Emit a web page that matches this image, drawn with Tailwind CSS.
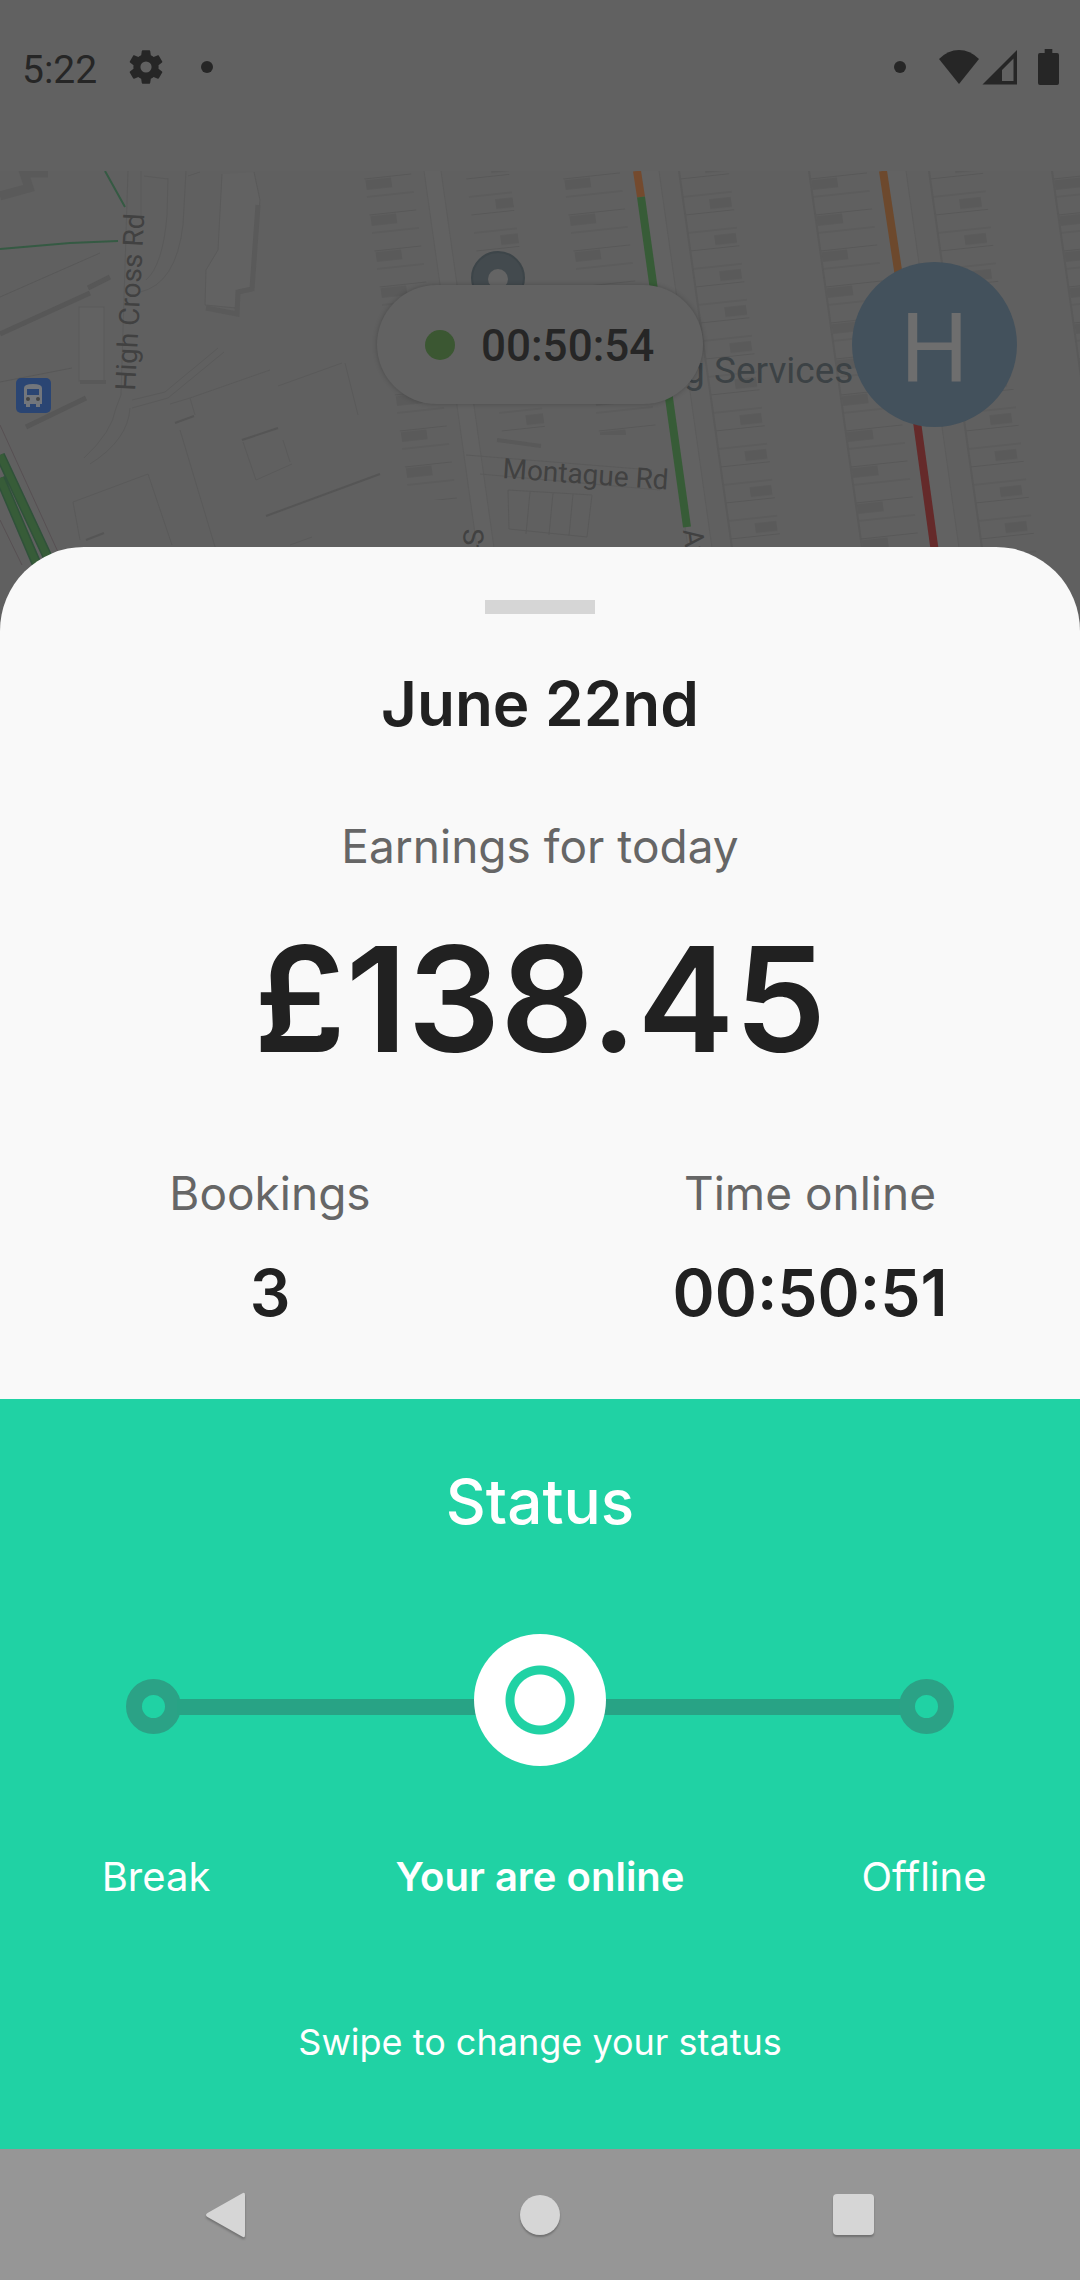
<!DOCTYPE html>
<html lang="en">
<head>
<meta charset="utf-8">
<meta name="viewport" content="width=device-width, initial-scale=1">
<title>Driver status</title>
<script src="https://cdn.jsdelivr.net/npm/@tailwindcss/browser@4"></script>
</head>
<body class="bg-[#616161] font-['Inter',sans-serif] text-[#212121]">
<div class="relative flex min-h-screen flex-col overflow-hidden">

  <!-- Dimmed street map -->
  <svg class="absolute inset-x-0 top-0 h-[640px] w-full" viewBox="0 0 1080 640" preserveAspectRatio="xMidYMin slice" fill="none" aria-hidden="true">
    <defs>
      <clipPath id="area"><rect y="171" width="1080" height="469"/></clipPath>
      <pattern id="plotsL" width="60" height="36" patternUnits="userSpaceOnUse" patternTransform="skewY(-6)">
        <path d="M0 1H60M0 19H60" stroke="#585858"/>
        <rect x="1" y="20" width="26" height="10" fill="#5a5a5a"/>
      </pattern>
      <pattern id="plotsR" width="60" height="36" patternUnits="userSpaceOnUse" patternTransform="skewY(-6)">
        <path d="M0 1H60M0 19H60" stroke="#585858"/>
        <rect x="26" y="6" width="22" height="10" fill="#5a5a5a"/>
      </pattern>
    </defs>
    <rect width="1080" height="640" fill="#616161"/>
    <g clip-path="url(#area)">
      <rect y="171" width="1080" height="469" fill="#606060"/>
      <!-- North-south streets and terraces -->
      <g transform="skewX(8)">
        <path d="M400 160h17v500h-17zM611 160h24v500h-24zM858 160h24v500h-24z" fill="#626262" stroke="#5c5c5c"/>
        <svg x="339" y="160" width="48" height="340"><rect width="48" height="340" fill="url(#plotsL)"/></svg>
        <svg x="441" y="160" width="44" height="280"><rect width="44" height="280" fill="url(#plotsR)"/></svg>
        <svg x="538" y="160" width="58" height="275"><rect width="58" height="275" fill="url(#plotsL)"/></svg>
        <svg x="655" y="160" width="50" height="400"><rect width="50" height="400" fill="url(#plotsR)"/></svg>
        <svg x="785" y="160" width="58" height="400"><rect width="58" height="400" fill="url(#plotsL)"/></svg>
        <svg x="905" y="160" width="54" height="400"><rect width="54" height="400" fill="url(#plotsR)"/></svg>
        <svg x="1028" y="160" width="50" height="240"><rect width="50" height="240" fill="url(#plotsL)"/></svg>
        <path d="M655 160V560M785 160V560M905 160V560M1028 160V400" stroke="#5a5a5a" stroke-width="2"/>
      </g>
      <!-- Cul-de-sac, access roads and large buildings -->
      <path d="M466 455 652 470M480 474 660 490" stroke="#5a5a5a"/>
      <path d="M508 490l84 5-5 42-78-8zM530 492l-4 42M553 493l-4 42M573 494l-4 42" stroke="#595959"/>
      <path d="M497 440l44 6" stroke="#595959" stroke-width="4"/>
      <path d="M128 171 121 395 116 408Q112 432 84 458M186 171 183 225Q176 284 140 292M141 171V216M168 178 167 215Q163 265 146 280M144 176 168 179M200 172 188 176" stroke="#5a5a5a"/>
      <path d="M132 400 165 392 218 348M132 408 168 398 224 352M130 408Q128 440 90 464" stroke="#5a5a5a"/>
      <path d="M222 174 218 250 206 270 205 305 236 308 238 290 252 288 260 200 254 172" fill="#626262" stroke="#5a5a5a"/>
      <path d="M206 308l31 6 1-22 14-3 6-84" stroke="#5a5a5a" stroke-width="5"/>
      <path d="M0 297 100 253M0 382 72 368" stroke="#585858"/>
      <path d="M0 334 90 293M88 288 110 277M26 427 86 398" stroke="#575757" stroke-width="5"/>
      <path d="M0 196 29 188 24 173H48" stroke="#5a5a5a" stroke-width="9"/>
      <rect x="79" y="307" width="25" height="74" fill="#626262" stroke="#5a5a5a"/>
      <path d="M80 382h26" stroke="#595959" stroke-width="4"/>
      <path d="M190 398 270 370M278 386 342 363M345 363 358 415M170 404 190 398 195 415M180 430 216 550M73 502 148 474 172 545M73 502 80 540M256 480 292 464M243 442 256 480M283 440 290 462M290 545 312 537" stroke="#5a5a5a"/>
      <path d="M175 423 194 416M242 440 278 428M266 516 380 474M86 540 104 533" stroke="#555" stroke-width="2"/>
      <path d="M0 425 58 552M0 520 22 565" stroke="#575053"/>
      <!-- Live traffic -->
      <path d="M0 455 64 592M0 478 52 600" stroke="#30523a" stroke-width="10"/>
      <path d="M0 455 64 592M0 478 52 600" stroke="#375c38" stroke-width="7"/>
      <path d="M105 171 125 207M0 249 70 243 118 241" stroke="#355a43" stroke-width="2"/>
      <path d="M637 171 641 197" stroke="#744a2e" stroke-width="8"/>
      <path d="M641 197 687 527" stroke="#375c37" stroke-width="8"/>
      <path d="M883 171 904 310" stroke="#6d492d" stroke-width="8"/>
      <path d="M914 400 936 560" stroke="#652a2a" stroke-width="8"/>
    </g>
    <!-- Place pin -->
    <circle cx="498" cy="278" r="26" fill="#434a4e" stroke="#3d4549" stroke-width="2"/>
    <circle cx="498" cy="279" r="10" fill="#646464"/>
    <!-- Bus stop -->
    <rect x="16" y="378" width="35" height="35" rx="5" fill="#2a4573"/>
    <path d="M24 388q0-4 9-4t9 4v16h-2v3h-4v-3h-6v3h-4v-3h-2z" fill="#72767c"/>
    <path d="M27 389h12v6H27z" fill="#2a4573"/>
    <circle cx="28" cy="399" r="2" fill="#444"/><circle cx="38" cy="399" r="2" fill="#444"/>
    <g class="font-['Roboto',sans-serif]" fill="#414141">
      <text x="0" y="0" font-size="28" transform="translate(135 391) rotate(-87)">High Cross Rd</text>
      <text x="0" y="0" font-size="28" transform="translate(502 478) rotate(4)">Montague Rd</text>
      <text x="0" y="0" font-size="28" transform="translate(463 529) rotate(87)">St</text>
      <text x="0" y="0" font-size="28" transform="translate(683 530) rotate(83)">Av</text>
      <text x="684" y="383" font-size="37" fill="#3c4245">g Services</text>
    </g>
  </svg>

  <!-- Status bar -->
  <header class="relative flex h-[134px] items-center justify-between pr-[21px] pl-[22px] text-[#262626]">
    <div class="flex items-center">
      <span class="w-[103px] pt-[5px] font-['Roboto',sans-serif] text-[39px] leading-[40px]">5:22</span>
      <svg class="h-[42px] w-[42px]" viewBox="0 0 24 24" fill="currentColor" role="img" aria-label="Settings"><path d="M19.14 12.94c.04-.3.06-.61.06-.94 0-.32-.02-.64-.07-.94l2.03-1.58c.18-.14.23-.41.12-.61l-1.92-3.32c-.12-.22-.37-.29-.59-.22l-2.39.96c-.5-.38-1.03-.7-1.62-.94l-.36-2.54c-.04-.24-.24-.41-.48-.41h-3.84c-.24 0-.43.17-.47.41l-.36 2.54c-.59.24-1.13.57-1.62.94l-2.39-.96c-.22-.08-.47 0-.59.22L2.740 8.870c-.12.21-.08.47.12.61l2.030 1.580c-.05.3-.09.63-.09.94s.02.64.07.94l-2.030 1.580c-.18.14-.23.41-.12.61l1.920 3.320c.12.22.37.29.59.22l2.390-.96c.5.38 1.030.7 1.620.94l.36 2.540c.05.24.24.41.48.41h3.840c.24 0 .44-.17.47-.41l.36-2.540c.59-.24 1.130-.56 1.620-.94l2.390.96c.22.08.47 0 .59-.22l1.920-3.320c.12-.22.07-.47-.12-.61l-2.010-1.580zM12 15.200A3.200 3.200 0 1 1 12 8.800a3.200 3.200 0 0 1 0 6.400z"/></svg>
      <span class="ml-[34px] size-3 rounded-full bg-current"></span>
    </div>
    <div class="flex items-center">
      <span class="mr-8 size-3 rounded-full bg-current"></span>
      <svg class="mr-[2px] h-[36px] w-[42px]" viewBox="0 0 42 36" fill="currentColor" role="img" aria-label="Wi-Fi"><path d="M21 35 1 10Q10 1 21 1T41 10z"/></svg>
      <svg class="mr-5 h-[36px] w-[36px]" viewBox="0 0 36 36" fill="currentColor" role="img" aria-label="Mobile signal"><path fill-rule="evenodd" d="M35 1v34.500H.5zM31.500 9.500 20 21V32h11.500z"/></svg>
      <svg class="h-[36px] w-[21px]" viewBox="0 0 22 36" preserveAspectRatio="none" fill="currentColor" role="img" aria-label="Battery"><path d="M7 0h8v4h5a2 2 0 0 1 2 2v28a2 2 0 0 1-2 2H2a2 2 0 0 1-2-2V6a2 2 0 0 1 2-2h5z"/></svg>
    </div>
  </header>

  <!-- Online timer and account -->
  <div class="relative grid grid-cols-[1fr_auto_1fr] items-center pt-32 pb-[120px] font-['Roboto',sans-serif]">
    <div class="col-start-2 flex h-[119px] w-[326px] items-center rounded-full bg-[#626262] pl-12 shadow-[0_0_5px_rgba(0,0,0,0.22)]">
      <span class="size-[30px] rounded-full bg-[#3b5732]"></span>
      <span class="ml-[26px] pt-[2px] text-[44px] leading-[52px] font-medium text-[#262626]">00:50:54</span>
    </div>
    <button type="button" aria-label="Account" class="mr-[63px] flex size-[165px] items-center justify-center justify-self-end rounded-full bg-[#43515c] pt-[8px] text-[96px] leading-none text-[#6e6e6e]">H</button>
  </div>

  <!-- Earnings sheet -->
  <main class="relative flex flex-col rounded-t-[84px] bg-[#f9f9f9] text-center">
    <div class="mx-auto mt-[53px] h-[14px] w-[110px] bg-[#d6d6d6]"></div>
    <h1 class="mt-[50px] text-[62px] leading-[80px] font-semibold">June 22nd</h1>
    <p class="mt-[72px] text-[46px] leading-[60px] text-[#666]">Earnings for today</p>
    <p class="mt-[43px] text-[146px] leading-[160px] font-semibold">£138.45</p>
    <dl class="mt-[84px] grid grid-cols-2 pb-[66px]">
      <div>
        <dt class="text-[46px] leading-[60px] text-[#666]">Bookings</dt>
        <dd class="mt-[30px] text-[64px] leading-[80px] font-semibold">3</dd>
      </div>
      <div>
        <dt class="text-[46px] leading-[60px] text-[#666]">Time online</dt>
        <dd class="mt-[30px] text-[64px] leading-[80px] font-semibold">00:50:51</dd>
      </div>
    </dl>
  </main>

  <!-- Status slider -->
  <section class="relative flex-1 bg-[#20d2a4] pt-[63px] pb-[77px] text-center text-white">
    <h2 class="text-[62px] leading-[80px] font-medium"><label for="status">Status</label></h2>
    <div class="relative mt-[92px]">
      <div class="absolute inset-x-[126px] top-[45px] flex items-center">
        <span class="size-[55px] rounded-full border-[16px] border-[#2ba286]"></span>
        <span class="-mx-1 h-4 flex-1 bg-[#28a385]"></span>
        <span class="size-[55px] rounded-full border-[16px] border-[#2ba286]"></span>
      </div>
      <div class="relative px-[87px]">
        <input id="status" type="range" min="0" max="2" step="1" value="1" class="block h-[132px] w-full appearance-none bg-transparent [&::-webkit-slider-thumb]:size-[132px] [&::-webkit-slider-thumb]:appearance-none [&::-webkit-slider-thumb]:rounded-full [&::-webkit-slider-thumb]:bg-[radial-gradient(circle,#fff_25px,#20d2a4_26px,#20d2a4_34px,#fff_35px)]">
      </div>
    </div>
    <div class="mt-[81px] flex items-center justify-between px-[6px] text-[40px] leading-[60px]">
      <span class="w-[300px]">Break</span>
      <span class="font-semibold">Your are online</span>
      <span class="w-[300px]">Offline</span>
    </div>
    <p class="mt-[105px] text-[36px] leading-[60px]">Swipe to change your status</p>
  </section>

  <!-- System navigation -->
  <nav class="relative flex h-[131px] items-center justify-between bg-[#969696] px-[179px] text-[#d6d6d6]">
    <button type="button" aria-label="Back" class="flex size-24 items-center justify-center">
      <svg class="h-12 w-12 drop-shadow-[0_2px_1px_rgba(0,0,0,0.25)]" viewBox="0 0 48 48" fill="currentColor"><path d="M39 2.500Q42 .5 42 4v40q0 3.500-3 1.500L4.500 26q-3-2 0-4z"/></svg>
    </button>
    <button type="button" aria-label="Home" class="flex size-24 items-center justify-center">
      <span class="size-10 rounded-full bg-current shadow-[0_2px_2px_rgba(0,0,0,0.25)]"></span>
    </button>
    <button type="button" aria-label="Recent apps" class="flex size-24 items-center justify-center">
      <span class="size-[41px] rounded-[4px] bg-current shadow-[0_2px_2px_rgba(0,0,0,0.25)]"></span>
    </button>
  </nav>
</div>
</body>
</html>
